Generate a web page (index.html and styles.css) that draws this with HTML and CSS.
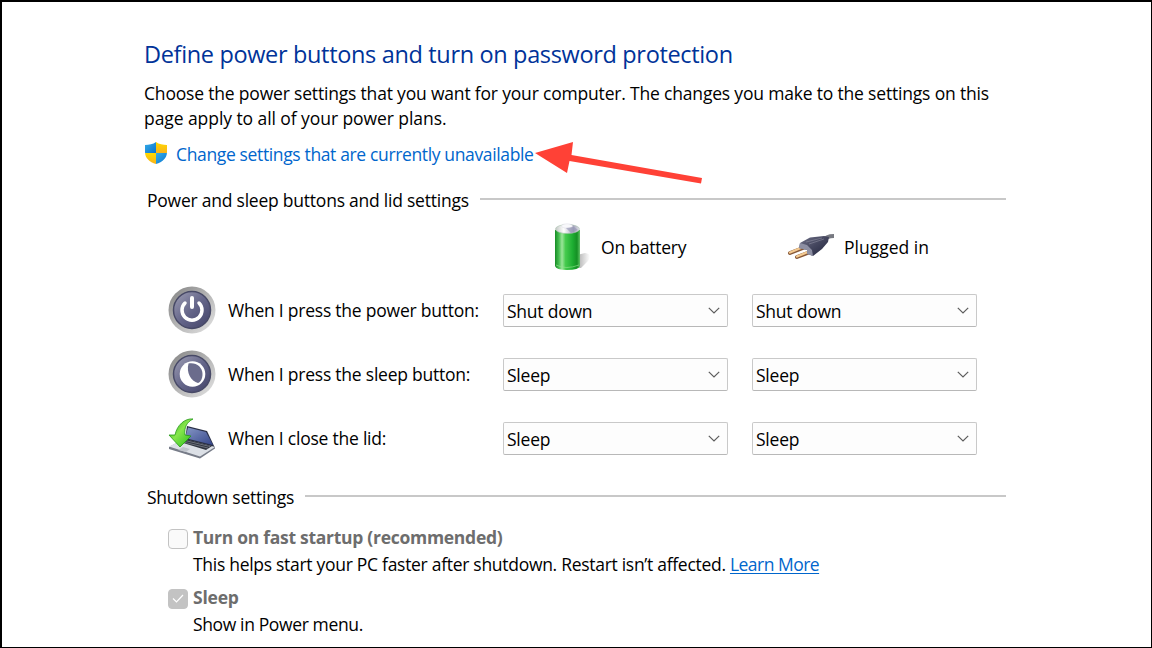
FILE: index.html
```html
<!DOCTYPE html>
<html lang="en">
<head>
    <meta charset="UTF-8">
    <meta name="viewport" content="width=device-width, initial-scale=1.0">
    <title>Power Options</title>
    <link rel="stylesheet" href="styles.css">
</head>
<body>
    <main class="window">
        <h1>Define power buttons and turn on password protection</h1>
        <p class="intro"><span class="intro-first">Choose the power settings that you want for your computer. The changes you make to the settings on this</span><br><span class="intro-second">page apply to all of your power plans.</span></p>

        <div class="admin">
            <svg class="shield" viewBox="0 0 22 22">
                <defs>
                    <linearGradient id="shieldBlue" x1="0" y1="0" x2="1" y2="1">
                        <stop offset="0" stop-color="#38aee8"/>
                        <stop offset="1" stop-color="#0874d0"/>
                    </linearGradient>
                    <linearGradient id="shieldYellow" x1="0" y1="0" x2="0" y2="1">
                        <stop offset="0" stop-color="#ffda00"/>
                        <stop offset="1" stop-color="#f9b21a"/>
                    </linearGradient>
                    <clipPath id="shieldShape">
                        <path d="M11 0C8 2.200 4 3 0 3V10C0 16 4.500 20 11 22C17.500 20 22 16 22 10V3C18 3 14 2.200 11 0Z"/>
                    </clipPath>
                </defs>
                <g clip-path="url(#shieldShape)">
                    <rect width="11" height="11" fill="url(#shieldBlue)"/>
                    <rect x="11" width="11" height="11" fill="url(#shieldYellow)"/>
                    <rect y="11" width="11" height="11" fill="url(#shieldYellow)"/>
                    <rect x="11" y="11" width="11" height="11" fill="url(#shieldBlue)"/>
                </g>
            </svg>
            <a class="admin-link">Change settings that are currently unavailable</a>
            <svg class="arrow" viewBox="0 0 170 45">
                <path d="M0 11L38 0L36.500 13L167 36L166 41.500L34.500 19L32 31Z" fill="#ff4136"/>
            </svg>
        </div>

        <h2 class="section-title buttons-title"><span>Power and sleep buttons and lid settings</span></h2>
        <div class="options">
            <div class="source source-battery">
                <svg viewBox="0 0 48 48">
                    <defs>
                        <linearGradient id="cell" x1="0" x2="1">
                            <stop offset="0" stop-color="#168c25"/>
                            <stop offset=".16" stop-color="#48c052"/>
                            <stop offset=".28" stop-color="#9be59a"/>
                            <stop offset=".42" stop-color="#46cb4e"/>
                            <stop offset=".7" stop-color="#1eae32"/>
                            <stop offset=".88" stop-color="#159024"/>
                            <stop offset="1" stop-color="#62c267"/>
                        </linearGradient>
                        <linearGradient id="cellTop" x1="0" x2="1">
                            <stop offset="0" stop-color="#c4c9c6"/>
                            <stop offset=".35" stop-color="#fff"/>
                            <stop offset=".75" stop-color="#a6a6bd"/>
                            <stop offset="1" stop-color="#e1e2e7"/>
                        </linearGradient>
                        <linearGradient id="cellShadow" x1="0" x2="1">
                            <stop offset="0" stop-color="#929292"/>
                            <stop offset="1" stop-color="#fff"/>
                        </linearGradient>
                    </defs>
                    <path d="M29 32L37 30Q45 31 40 38L33 45H25Z" fill="url(#cellShadow)"/>
                    <path d="M7 7V43Q8 47 19 47Q31 47 32 43V7Z" fill="url(#cell)"/>
                    <path d="M8 42Q18 47 31 42" stroke="#94e68f" stroke-opacity=".6" fill="none"/>
                    <ellipse cx="19.500" cy="6" rx="12" ry="4.500" fill="url(#cellTop)" stroke="#a3bfa8" stroke-width=".5"/>
                    <ellipse cx="19" cy="3" rx="5.500" ry="2.200" fill="#f8f8fb" stroke="#d5d5df" stroke-width=".4"/>
                    <path d="M18 5L26 4L30 7L23 10Z" fill="#9594b4" opacity=".6"/>
                </svg>
                <span>On battery</span>
            </div>
            <div class="source source-plug">
                <svg viewBox="0 0 48 48">
                    <defs>
                        <linearGradient id="plugBody" x1="0" y1="0" x2="1" y2="1">
                            <stop offset="0" stop-color="#72748b"/>
                            <stop offset=".5" stop-color="#44465e"/>
                            <stop offset="1" stop-color="#20233c"/>
                        </linearGradient>
                    </defs>
                    <path d="M36 18Q39 13 47 13" stroke="#777981" stroke-width="4" fill="none"/>
                    <path d="M3 30L16 25M10 34L23 29" stroke="#875838" stroke-width="4" stroke-linecap="round"/>
                    <path d="M3 29.500L15 24.500M10 33.500L22 28.500" stroke="#f3c990" stroke-width="2.400" stroke-linecap="round"/>
                    <path d="M13 20L23 14.500L37 13L42 14L41 19L35 26L26 33L21 31L20 27L12 25Z" fill="url(#plugBody)"/>
                    <path d="M13 20L20 22L25 27L26 33L20 31V27L12 25Z" fill="#8d8fa3"/>
                    <path d="M19 19L35 15M22 21L37 16" stroke="#9a9bac" stroke-width=".8" opacity=".6"/>
                </svg>
                <span>Plugged in</span>
            </div>

            <svg class="row-icon round" viewBox="0 0 48 48">
                <defs>
                    <linearGradient id="ring" x1="0" y1="0" x2="1" y2="1">
                        <stop offset="0" stop-color="#818181"/>
                        <stop offset=".5" stop-color="#b5b5b5"/>
                        <stop offset="1" stop-color="#e5e5e5"/>
                    </linearGradient>
                    <linearGradient id="disc" x1="0" y1="0" x2="1" y2="1">
                        <stop offset="0" stop-color="#a0a0b5"/>
                        <stop offset=".5" stop-color="#65668a"/>
                        <stop offset="1" stop-color="#414267"/>
                    </linearGradient>
                </defs>
                <circle cx="24" cy="24" r="23.500" fill="url(#ring)"/>
                <circle cx="24" cy="24" r="18.500" fill="url(#disc)" stroke="#484a67" stroke-width="1.500"/>
                <path d="M17 17A10 10 0 1 0 31 17" fill="none" stroke="#fff" stroke-width="3.500" stroke-linecap="round"/>
                <path d="M24 12V21" stroke="#fff" stroke-width="4" stroke-linecap="round"/>
            </svg>
            <label class="label-power">When I press the power button:</label>
            <div class="dropdown"><span>Shut down</span><svg viewBox="0 0 12 7"><path d="M.8.8L6 6L11.200.8"/></svg></div>
            <div class="dropdown"><span>Shut down</span><svg viewBox="0 0 12 7"><path d="M.8.8L6 6L11.200.8"/></svg></div>

            <svg class="row-icon round" viewBox="0 0 48 48">
                <circle cx="24" cy="24" r="23.500" fill="url(#ring)"/>
                <circle cx="24" cy="24" r="18.500" fill="url(#disc)" stroke="#484a67" stroke-width="1.500"/>
                <circle cx="24.500" cy="24" r="12.800" fill="#fff"/>
                <path d="M20.500 13.500C28 12 34.500 17 34.500 24C34.500 28 33 32 30 33C23 31 18 23 20.500 13.500Z" fill="#6b6c8c"/>
            </svg>
            <label class="label-sleep">When I press the sleep button:</label>
            <div class="dropdown"><span>Sleep</span><svg viewBox="0 0 12 7"><path d="M.8.8L6 6L11.200.8"/></svg></div>
            <div class="dropdown"><span>Sleep</span><svg viewBox="0 0 12 7"><path d="M.8.8L6 6L11.200.8"/></svg></div>

            <svg class="row-icon lid" viewBox="0 0 48 48">
                <defs>
                    <linearGradient id="screen" x1="0" y1="0" x2="1" y2="1">
                        <stop offset="0" stop-color="#8798c6"/>
                        <stop offset="1" stop-color="#34458a"/>
                    </linearGradient>
                    <linearGradient id="lidArrow" x1="0" y1="0" x2="1" y2="1">
                        <stop offset="0" stop-color="#23a516"/>
                        <stop offset=".45" stop-color="#87e64c"/>
                        <stop offset="1" stop-color="#20bc14"/>
                    </linearGradient>
                </defs>
                <path d="M19 11L39 16L47 33L17 25Z" fill="#292f46"/>
                <path d="M20 12.500L38 17L45 30L17 23Z" fill="url(#screen)"/>
                <path d="M1 32L16 24L47 32V33.500L32 43.500L1 34Z" fill="#777c88"/>
                <path d="M1 31.500L16 24L47 32L32 41.500Z" fill="#dce0e6"/>
                <path d="M12 27L18 24L44 31L38 35Z" fill="#30343f"/>
                <path d="M15 27L40 33M17 25.500L42 31.500" stroke="#858b95" stroke-width=".7"/>
                <path d="M15 32L22 34L18 37L10 35Z" fill="#bfc4cb"/>
                <path d="M25 4C17 3 9 10 7 20H1L12 32L23 21L17 20C16 12 19 7 25 4Z" fill="url(#lidArrow)" stroke="#239915" stroke-width=".8"/>
            </svg>
            <label class="label-lid">When I close the lid:</label>
            <div class="dropdown"><span>Sleep</span><svg viewBox="0 0 12 7"><path d="M.8.8L6 6L11.200.8"/></svg></div>
            <div class="dropdown"><span>Sleep</span><svg viewBox="0 0 12 7"><path d="M.8.8L6 6L11.200.8"/></svg></div>
        </div>

        <h2 class="section-title shutdown-title"><span>Shutdown settings</span></h2>
        <div class="shutdown">
            <div class="check-row">
                <span class="checkbox"></span>
                <b class="fast">Turn on fast startup (recommended)</b>
            </div>
            <p class="fast-help">This helps start your PC faster after shutdown. Restart isn’t affected. <a class="learn">Learn More</a></p>
            <div class="check-row">
                <span class="checkbox checked"><svg viewBox="0 0 12 9"><path d="M1 4.500L4.500 8L11 1"/></svg></span>
                <b>Sleep</b>
            </div>
            <p class="sleep-help">Show in Power menu.</p>
        </div>
    </main>
</body>
</html>
```
FILE: styles.css
```css
* {
    box-sizing: border-box;
}

body {
    margin: 0;
    background: #fff;
    color: #000;
    font-family: "Open Sans", "Noto Sans", sans-serif;
    font-size: 17.5px;
    line-height: 26px;
    letter-spacing: -0.23px;
    overflow: hidden;
}

h1, h2, p {
    margin: 0;
    font-weight: 400;
}

span, a, b, label {
    white-space: nowrap;
}

.window {
    height: 648px;
    padding: 36px 145px 0 142px;
    border: solid #000;
    border-width: 2px 1px 1px 2px;
    overflow: hidden;
}

h1 {
    color: #003399;
    font-size: 23.5px;
    line-height: 33px;
    letter-spacing: -0.34px;
}

.intro {
    margin-top: 10px;
    line-height: 25px;
}

.intro-first {
    letter-spacing: -0.185px;
}

.intro-second {
    letter-spacing: -0.07px;
}

.admin {
    display: flex;
    align-items: center;
    height: 26px;
    margin-top: 10px;
}

.shield {
    width: 22px;
    height: 22px;
    margin: -3px 9px 0 1px;
}

.admin-link, .learn {
    color: #0066cc;
}

.admin-link {
    letter-spacing: -0.36px;
}

.arrow {
    width: 170px;
    height: 45px;
    margin: 21px 0 0 1px;
    flex-shrink: 0;
}

.section-title {
    display: flex;
    align-items: center;
    margin-left: 3px;
    font-size: 17.5px;
    line-height: 26px;
}

.section-title::after {
    content: "";
    flex: 1;
    height: 2px;
    margin: -3px 0 0 11px;
    background: #c8c8c8;
}

.buttons-title {
    margin-top: 20px;
}

.options {
    display: grid;
    grid-template-columns: 60px 275px 225px 225px;
    grid-template-rows: 63px 64px 64px 64px;
    align-items: center;
    margin: 2px 0 0 24px;
}

.source {
    display: flex;
    align-items: center;
    padding-top: 1px;
}

.source svg {
    width: 48px;
    height: 48px;
}

.source-battery {
    grid-column: 3;
    padding-left: 45px;
}

.source-battery span {
    margin-left: 5px;
}

.source-plug {
    grid-column: 4;
    padding-left: 59px;
}

.source-plug span {
    margin-left: 9px;
    letter-spacing: 0;
}

.row-icon {
    width: 48px;
    height: 48px;
}

.round {
    margin-top: -1px;
}

.lid {
    margin-top: 1px;
}

.dropdown {
    display: flex;
    align-items: center;
    justify-content: space-between;
    width: 225px;
    height: 33px;
    padding: 2px 7px 0 3px;
    border: 1px solid #c9c9c9;
    border-bottom-color: #b8b8b8;
    border-radius: 2px;
    background: #fdfdfd;
}

.dropdown + .dropdown {
    margin-left: 24px;
}

.dropdown svg {
    width: 12px;
    height: 7px;
    margin-top: -1px;
    fill: none;
    stroke: #5d5d5d;
    stroke-width: 1.2;
}

.shutdown-title {
    margin-top: 14px;
}

.shutdown {
    margin: 15px 0 0 24px;
}

.check-row {
    display: flex;
    align-items: center;
    height: 26px;
    color: #6d6d6d;
}

.check-row b {
    margin-top: -2px;
}

.fast {
    letter-spacing: -0.28px;
}

.checkbox {
    display: grid;
    place-items: center;
    width: 20px;
    height: 20px;
    margin: 1px 5px 0 0;
    border: 1px solid #c3c3c3;
    border-radius: 4px;
    background: #fafafa;
}

.checked {
    background: #c3c3c3;
}

.checkbox svg {
    width: 12px;
    height: 9px;
    fill: none;
    stroke: #fff;
    stroke-width: 1.2;
}

.shutdown p {
    height: 34px;
    padding-left: 25px;
}

.fast-help {
    letter-spacing: -0.29px;
}

.learn {
    letter-spacing: -0.52px;
    text-decoration: underline;
    text-underline-offset: 2px;
    text-decoration-thickness: 1px;
}

.sleep-help {
    letter-spacing: -0.37px;
}
```
